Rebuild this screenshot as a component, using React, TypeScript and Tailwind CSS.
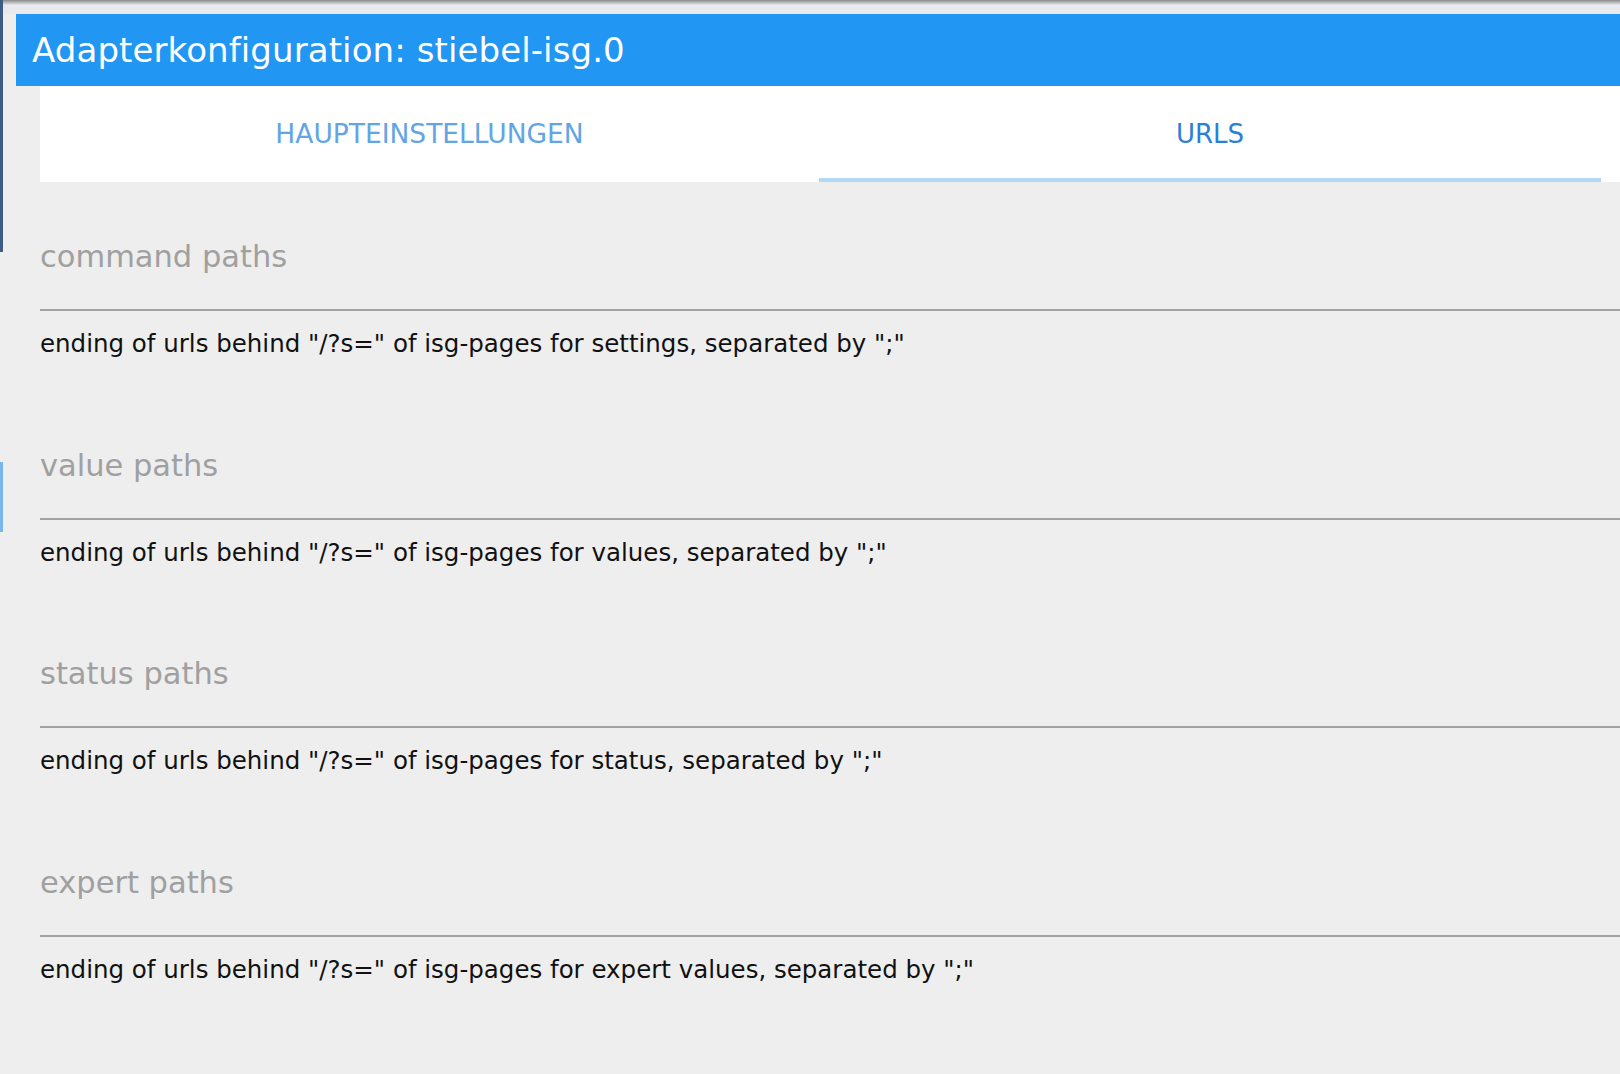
const sections = [
  { title: 'command paths', hint: 'ending of urls behind "/?s=" of isg-pages for settings, separated by ";"' },
  { title: 'value paths', hint: 'ending of urls behind "/?s=" of isg-pages for values, separated by ";"' },
  { title: 'status paths', hint: 'ending of urls behind "/?s=" of isg-pages for status, separated by ";"' },
  { title: 'expert paths', hint: 'ending of urls behind "/?s=" of isg-pages for expert values, separated by ";"' },
]

const App = () => {
  return (
    <div className="flex h-[1074px] w-full overflow-hidden bg-[#eeeeee] font-['DejaVu_Sans',sans-serif]">
      {/* window edge */}
      <div className="flex w-[3px] flex-col">
        <div className="h-[252px] bg-[#3d5d84]" />
        <div className="h-[210px] bg-[#eeeeee]" />
        <div className="h-[70px] bg-[#7ab6ee]" />
        <div className="flex-1 bg-[#eeeeee]" />
      </div>

      <div className="flex min-w-0 flex-1 flex-col">
        <div className="h-[5px] bg-gradient-to-b from-[#8a8a8a] to-[#e8eaed]" />
        <div className="h-[9px] bg-[#e8eaed]" />

        <div className="ml-[13px] flex h-[72px] items-center bg-[#2196f3] pl-4 text-[34px] tracking-[0.1px] text-white">
          Adapterkonfiguration: stiebel-isg.0
        </div>

        <div className="ml-[37px] flex h-[96px] bg-white">
          <div className="flex w-[779px] items-center justify-center text-[26.5px] text-[#62a4e4]">
            HAUPTEINSTELLUNGEN
          </div>
          <div className="flex w-[782px] items-center justify-center border-b-4 border-[#b3d8f5] pt-1 text-[26px] text-[#2a80d6]">
            URLS
          </div>
        </div>

        <main className="pl-[37px] pt-[55px]">
          {sections.map((s) => (
            <section key={s.title} className="mb-[85.5px]">
              <h2 className="mb-[32px] text-[30.5px] leading-[40px] text-[#a0a0a0]">{s.title}</h2>
              <div className="border-t-2 border-[#a2a2a2]" />
              <p className="mt-[17px] text-[24.5px] leading-[32px] text-[#111111]">{s.hint}</p>
            </section>
          ))}
        </main>
      </div>
    </div>
  )
}

export default App
